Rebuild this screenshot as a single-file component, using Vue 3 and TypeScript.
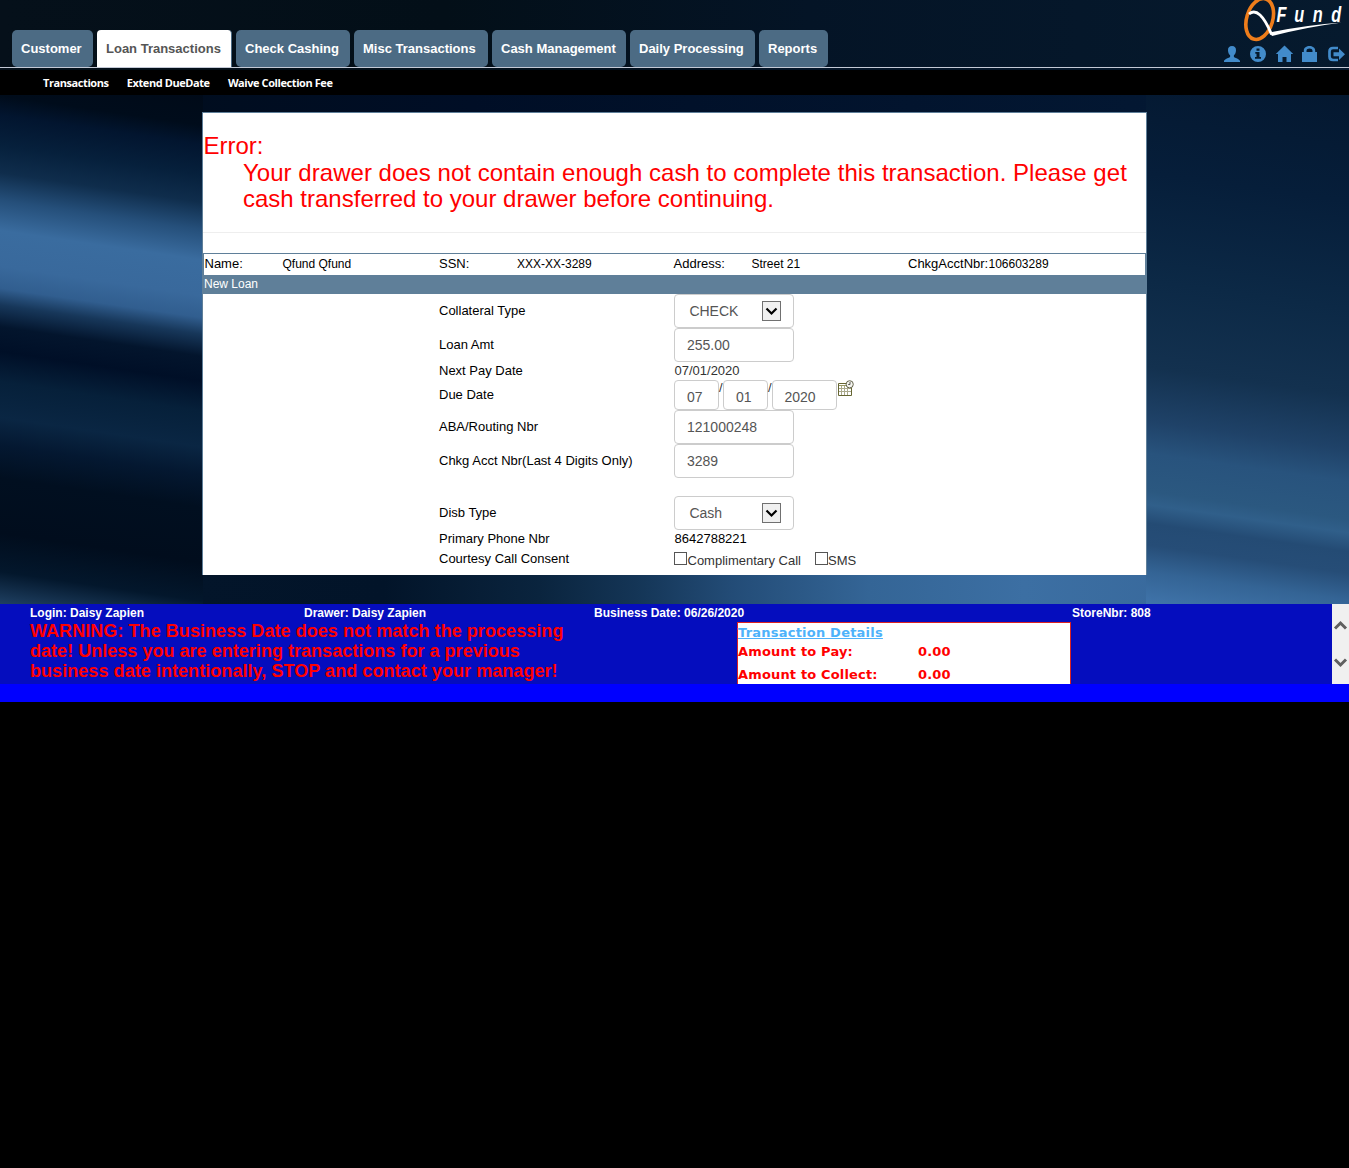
<script setup lang="ts">
interface Tab { label: string; width: number; active?: boolean }
interface Row {
  label: string
  kind: 'select' | 'input' | 'text' | 'date' | 'checks'
  value?: string
  cls: string
}

const tabs: Tab[] = [
  { label: 'Customer', width: 81 },
  { label: 'Loan Transactions', width: 135, active: true },
  { label: 'Check Cashing', width: 114 },
  { label: 'Misc Transactions', width: 134 },
  { label: 'Cash Management', width: 134 },
  { label: 'Daily Processing', width: 125 },
  { label: 'Reports', width: 69 },
]
const subMenu: string[] = ['Transactions', 'Extend DueDate', 'Waive Collection Fee']
const rows: Row[] = [
  { label: 'Collateral Type', kind: 'select', value: 'CHECK', cls: 'tall' },
  { label: 'Loan Amt', kind: 'input', value: '255.00', cls: 'tall' },
  { label: 'Next Pay Date', kind: 'text', value: '07/01/2020', cls: 'short pay' },
  { label: 'Due Date', kind: 'date', cls: 'due' },
  { label: 'ABA/Routing Nbr', kind: 'input', value: '121000248', cls: 'tall' },
  { label: 'Chkg Acct Nbr(Last 4 Digits Only)', kind: 'input', value: '3289', cls: 'tall' },
  { label: 'Disb Type', kind: 'select', value: 'Cash', cls: 'tall spaced' },
  { label: 'Primary Phone Nbr', kind: 'text', value: '8642788221', cls: 'short' },
  { label: 'Courtesy Call Consent', kind: 'checks', cls: 'consent' },
]
</script>

<template>
  <div class="page">
    <div class="stage">
      <svg class="backdrop" width="1349" height="604" viewBox="0 0 1349 604">
        <defs>
          <linearGradient id="bgTop" x1="0" x2="1" y1="0" y2="0">
            <stop offset="0" stop-color="#05101a" />
            <stop offset=".33" stop-color="#030f18" />
            <stop offset=".6" stop-color="#041426" />
            <stop offset="1" stop-color="#061a2e" />
          </linearGradient>
          <linearGradient id="bgStrip" x1="0" x2="1" y1="0" y2="0">
            <stop offset="0" stop-color="#000c1a" />
            <stop offset=".35" stop-color="#000e26" />
            <stop offset="1" stop-color="#041a36" />
          </linearGradient>
          <linearGradient id="bgLeft" gradientUnits="userSpaceOnUse" x1="0" y1="60" x2="0" y2="610">
            <stop offset="0" stop-color="#000a18" />
            <stop offset=".065" stop-color="#000c1b" />
            <stop offset=".1" stop-color="#02152f" />
            <stop offset=".155" stop-color="#06203c" />
            <stop offset=".205" stop-color="#0f2d4c" />
            <stop offset=".255" stop-color="#254f7a" />
            <stop offset=".31" stop-color="#3a6c9f" />
            <stop offset=".375" stop-color="#39699c" />
            <stop offset=".415" stop-color="#315e8f" />
            <stop offset=".445" stop-color="#17375a" />
            <stop offset=".485" stop-color="#03152d" />
            <stop offset=".53" stop-color="#000f27" />
            <stop offset=".585" stop-color="#06203a" />
            <stop offset=".65" stop-color="#0a2643" />
            <stop offset=".7" stop-color="#041831" />
            <stop offset=".76" stop-color="#010f20" />
            <stop offset=".86" stop-color="#010d1d" />
            <stop offset=".93" stop-color="#03172c" />
            <stop offset="1" stop-color="#24476b" />
          </linearGradient>
          <linearGradient id="bgRight" gradientUnits="userSpaceOnUse" x1="0" y1="65" x2="0" y2="604">
            <stop offset="0" stop-color="#041830" />
            <stop offset=".2" stop-color="#061e3a" />
            <stop offset=".4" stop-color="#0c2946" />
            <stop offset=".56" stop-color="#13314f" />
            <stop offset=".66" stop-color="#1f4268" />
            <stop offset=".72" stop-color="#28537d" />
            <stop offset=".79" stop-color="#2b5880" />
            <stop offset=".815" stop-color="#305f8a" />
            <stop offset=".85" stop-color="#244b74" />
            <stop offset=".89" stop-color="#264d77" />
            <stop offset=".94" stop-color="#346495" />
            <stop offset="1" stop-color="#4074aa" />
          </linearGradient>
          <linearGradient id="bgBottom" x1="0" x2="1" y1="0" y2="0">
            <stop offset="0" stop-color="#03152a" />
            <stop offset=".2" stop-color="#021429" />
            <stop offset=".36" stop-color="#0a243e" />
            <stop offset=".46" stop-color="#143556" />
            <stop offset=".56" stop-color="#234c77" />
            <stop offset=".7" stop-color="#346596" />
            <stop offset=".86" stop-color="#3c6fa3" />
            <stop offset="1" stop-color="#396a9d" />
          </linearGradient>
          <clipPath id="bodyArea"><path d="M0 95H1349V604H0Z" /></clipPath>
        </defs>
        <path d="M0 0H1349V95H0Z" fill="url(#bgTop)" />
        <path d="M0 95H1349V130H0Z" fill="url(#bgStrip)" />
        <path d="M190 560H1160V604H190Z" fill="url(#bgBottom)" />
        <g clip-path="url(#bodyArea)">
          <path d="M0 0H203V640H0Z" fill="url(#bgLeft)" transform="skewY(8.3)" />
          <path d="M0 -40H203V640H0Z" fill="url(#bgRight)" transform="translate(1146 0) skewY(8)" />
        </g>
      </svg>

      <header class="header">
        <nav class="tabs">
          <a v-for="t in tabs" :key="t.label" class="tab" :class="{ active: t.active }" :style="{ width: t.width + 'px' }"><span>{{ t.label }}</span></a>
        </nav>
        <div class="brand">
          <svg class="logo" width="109" height="42" viewBox="1240 0 109 42">
            <g fill="none">
              <ellipse cx="1259.700" cy="19" rx="13" ry="21" stroke="#ee7d1b" stroke-width="3.600" transform="rotate(17 1259.700 19)" />
              <path d="M1249 14C1256 8 1264 16 1271.500 34.500" stroke="#fff" stroke-width="2.800" />
            </g>
            <path d="M1270 33L1272 36Q1307 27 1342 22.500Q1307 25 1272 32Z" fill="#fff" />
            <g transform="translate(1276.500 22) scale(.74 1)">
              <text class="logo-text" x="0 24 49 74" y="0">Fund</text>
            </g>
          </svg>
          <svg class="icons" width="125" height="18" viewBox="1224 45 125 18" fill="#428bca">
            <path d="M1232 46c-2.700 0-4.200 1.800-4 4.400.1 2.300 1 3.900 2.100 4.800v1.700c-.7 1-5.600 1.700-6.100 4.200v.9h16v-.9c-.5-2.500-5.400-3.200-6.100-4.200v-1.700c1.100-.9 2-2.500 2.100-4.800.2-2.600-1.300-4.400-4-4.400Z" />
            <path fill-rule="evenodd" d="M1258 46a8 8 0 1 0 0 16a8 8 0 0 0 0-16ZM1256.500 48.500h3v2.300h-3ZM1255.300 52h4.200v5h1.500v1.700h-6v-1.700h1.500v-3.300h-1.200Z" />
            <path d="M1284.500 45.500L1293.200 54H1291v8h-4.500v-5h-4v5h-4.500v-8h-2.200Z" />
            <path fill-rule="evenodd" d="M1302 52h1.800v-1.500c0-6 11.400-6 11.400 0V52h1.800v10h-15Zm4.500 0h6v-1.300c0-3-6-3-6 0Z" />
            <path d="M1338 48h-5c-2.200 0-3.500 1.300-3.500 3.500v5c0 2.200 1.300 3.500 3.500 3.500h5" fill="none" stroke="#428bca" stroke-width="2.700" />
            <path d="M1333.500 52.200h5.500v-3.700l6 5.700-6 5.700v-3.700h-5.500Z" />
          </svg>
        </div>
      </header>

      <nav class="submenu">
        <a v-for="s in subMenu" :key="s">{{ s }}</a>
      </nav>

      <main class="panel">
        <section class="error">
          <div class="error-title">Error:</div>
          <div class="error-body">Your drawer does not contain enough cash to complete this transaction. Please get</div>
          <div class="error-body second-line">cash transferred to your drawer before continuing.</div>
        </section>
        <section class="customer">
          <span class="key">Name:</span><span class="val">Qfund Qfund</span>
          <span class="key">SSN:</span><span class="val">XXX-XX-3289</span>
          <span class="key">Address:</span><span class="val">Street 21</span>
          <span class="key acct">ChkgAcctNbr:</span><span class="val">106603289</span>
        </section>
        <h2 class="section-title">New Loan</h2>
        <section class="form">
          <div v-for="r in rows" :key="r.label" class="row" :class="r.cls">
            <label>{{ r.label }}</label>
            <div v-if="r.kind === 'select'" class="box select">
              <span>{{ r.value }}</span>
              <i class="arrow"><svg width="17" height="18" viewBox="0 0 17 18"><path d="M3.500 6.500L8.500 11.500L13.500 6.500" fill="none" stroke="#000" stroke-width="2.200" /></svg></i>
            </div>
            <div v-else-if="r.kind === 'input'" class="box">{{ r.value }}</div>
            <div v-else-if="r.kind === 'text'" class="plain">{{ r.value }}</div>
            <div v-else-if="r.kind === 'date'" class="date">
              <div class="box d">07</div><span class="slash">/</span>
              <div class="box d">01</div><span class="slash">/</span>
              <div class="box d year">2020</div>
              <svg class="cal" width="17" height="17" viewBox="0 0 17 17">
                <path d="M1.500 3.500H14.500V15.500H1.500Z" fill="#fff" stroke="#666633" />
                <path d="M2 5.500H14" stroke="#999966" />
                <path d="M4.500 6V15M7.500 6V15M10.500 6V15M2 8.500H14M2 11.500H14" stroke="#aaa98c" />
                <circle cx="12.700" cy="4.300" r="3.600" fill="#f4f4ee" stroke="#666650" />
                <path d="M13 2V4.500H11.200" fill="none" stroke="#555" />
              </svg>
            </div>
            <div v-else class="checks">
              <i class="check"></i><span class="c1">Complimentary Call</span>
              <i class="check"></i><span>SMS</span>
            </div>
          </div>
        </section>
      </main>
    </div>

    <footer class="status">
      <div class="status-main">
        <div class="status-line">
          <span class="login">Login: Daisy Zapien</span>
          <span class="drawer">Drawer: Daisy Zapien</span>
          <span class="bdate">Business Date: 06/26/2020</span>
          <span>StoreNbr: 808</span>
        </div>
        <div class="status-body">
          <div class="warning">
            <div>WARNING: The Business Date does not match the processing</div>
            <div class="w2">date! Unless you are entering transactions for a previous</div>
            <div>business date intentionally, STOP and contact your manager!</div>
          </div>
          <div class="details">
            <a>Transaction Details</a>
            <div class="amount"><span>Amount to Pay:</span><b>0.00</b></div>
            <div class="amount second"><span>Amount to Collect:</span><b>0.00</b></div>
          </div>
        </div>
      </div>
      <div class="scroll">
        <svg width="17" height="80" viewBox="0 0 17 80" fill="none" stroke="#606060" stroke-width="3">
          <path d="M3 24.500L8.500 19L14 24.500M3 55.500L8.500 61L14 55.500" />
        </svg>
      </div>
    </footer>
    <div class="strip"></div>
  </div>
</template>

<style>
html, body { margin: 0; background: #000; }
</style>

<style scoped>
.page { width: 1349px; height: 1168px; overflow: hidden; background: #000; font-family: "Liberation Sans", Arial, sans-serif; }
.page * { box-sizing: border-box; }
.stage { position: relative; height: 604px; overflow: hidden; }
.backdrop { position: absolute; left: 0; top: 0; }
.header { position: relative; display: flex; justify-content: space-between; height: 68px; border-bottom: 1px solid #c3c9d6; }
.tabs { display: flex; align-items: flex-start; gap: 4px; padding: 30px 0 0 12px; }
.tab { height: 36.600px; padding-left: 9px; border-radius: 5px; background: #4c6b84; color: #fff; font-size: 13px; font-weight: bold; line-height: 37px; white-space: nowrap; }
.tab.active { height: 37px; background: #fff; color: #555; border-right: 1px solid #4c6b84; border-radius: 4px 4px 0 0; }
.brand { display: flex; flex-direction: column; align-items: flex-end; }
.logo, .icons { display: block; }
.icons { margin-top: 3px; }
.logo-text { font-family: "Liberation Sans", Arial, sans-serif; font-size: 22px; font-weight: bold; font-style: italic; fill: #fff; }
.submenu { position: relative; display: flex; gap: 18.200px; height: 25px; margin-top: 2px; padding-left: 43px; background: #000; color: #fff; font: 700 11px/25px "Open Sans", "Noto Sans", sans-serif; letter-spacing: -.42px; }
.panel { position: relative; width: 945px; height: 463px; margin: 17px 0 0 202px; border: 1px solid #5f7f99; border-bottom: 0; background: #fff; }
.error { height: 120px; padding-top: 20px; border-bottom: 1px solid #eee; color: #f00; font-size: 24px; line-height: 26.400px; white-space: nowrap; }
.error-title { height: 27px; padding-left: .5px; }
.error-body { padding-left: 40px; letter-spacing: .035px; line-height: 26px; }
.second-line { letter-spacing: 0; }
.customer { display: flex; height: 22px; margin-top: 20px; padding-left: .5px; border: 1px solid #5f7f99; border-bottom: 0; color: #000; font-size: 12px; line-height: 21px; white-space: nowrap; }
.customer .key { width: 78px; font-size: 13px; line-height: 19px; }
.customer .key.acct { width: 80.500px; }
.customer .val { width: 156.500px; }
.section-title { height: 19px; margin: 0; padding-left: 1px; background: #5f7f99; color: #fff; font-size: 12px; font-weight: normal; line-height: 18px; }
.form { font-size: 13px; color: #000; }
.row { display: flex; align-items: center; padding-left: 236px; }
.row label { width: 235px; white-space: nowrap; padding-bottom: 1px; }
.tall { height: 34px; }
.short { height: 18px; }
.short .plain { padding: 0 0 1px .5px; }
.due { height: 30px; }
.spaced { margin-top: 18px; }
.consent { height: 24px; }
.consent label { padding-bottom: 3px; }
.box { width: 120px; height: 34px; padding-left: 12px; border: 1px solid #ccc; border-radius: 4px; background: #fff; color: #555; font-size: 14px; line-height: 32px; }
.select { display: flex; justify-content: space-between; align-items: center; padding: 0 12px 0 14.400px; }
.arrow { display: block; width: 19px; height: 20px; border: 1px solid #707070; background: #f0f0f0; }
.arrow svg { display: block; }
.pay .plain { color: #333; }
.date { display: flex; height: 30px; }
.box.d { width: 45px; height: 30px; }
.box.year { width: 65px; padding-left: 11.500px; }
.slash { width: 4px; line-height: 16px; color: #333; }
.cal { display: block; }
.checks { display: flex; align-items: center; height: 24px; color: #333; padding-top: 1px; }
.check { width: 13px; height: 13px; border: 1px solid #555; margin-top: -4px; }
.c1 { width: 128px; padding-left: .5px; }
.status { display: flex; height: 80px; background: #050dbe; overflow: hidden; }
.status-main { width: 1332px; }
.status-line { display: flex; height: 18px; padding-left: 30px; color: #fff; font-size: 12px; font-weight: bold; line-height: 18px; white-space: nowrap; }
.login { width: 274px; }
.drawer { width: 290px; }
.bdate { width: 478px; }
.status-body { display: flex; height: 62px; padding-left: 30px; }
.warning { width: 707px; margin-top: -1px; color: #f00; font-size: 18px; font-weight: bold; line-height: 20px; letter-spacing: .06px; white-space: nowrap; }
.w2 { letter-spacing: .03px; }
.details { width: 334px; height: 90px; padding-top: 1px; border: 1px solid #d22; background: #fff; color: #f00; font: bold 13px/18px "DejaVu Sans", Verdana, sans-serif; letter-spacing: .16px; white-space: nowrap; }
.details a { display: block; color: #4eb2fa; text-decoration: underline; letter-spacing: .22px; }
.amount { display: flex; height: 20px; line-height: 20px; }
.amount span { width: 180px; }
.second { margin-top: 3px; }
.scroll { width: 17px; background: #f0f0f0; }
.scroll svg { display: block; }
.strip { height: 18px; background: #00f; }
</style>
